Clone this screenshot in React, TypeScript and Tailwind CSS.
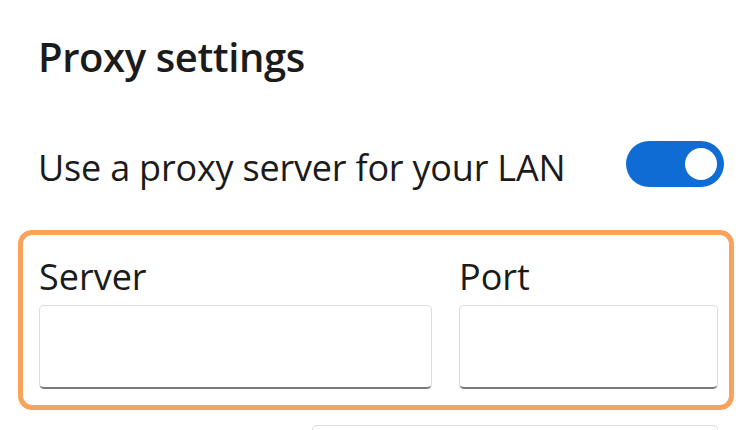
import React, { useState } from 'react';

const font = { fontFamily: '"Open Sans", "Noto Sans", sans-serif' };

const TextBox = ({ className = '' }: { className?: string }) => (
  <div
    className={`h-[84px] rounded-[5px] border border-[#dcdcdc] border-b-2 border-b-[#7a7a7a] bg-white ${className}`}
  />
);

const App = () => {
  const [enabled, setEnabled] = useState(true);

  return (
    <div className="w-[750px] h-[430px] overflow-hidden bg-white text-[#1b1b1b]" style={font}>
      {/* Heading */}
      <h1 className="pl-[38px] pt-[30px] text-[40px] leading-[54px] font-semibold tracking-[-0.4px]">
        Proxy settings
      </h1>

      {/* Toggle row */}
      <div className="mt-[52px] flex items-center justify-between pl-[38px] pr-[26px]">
        <span className="pt-[8px] text-[36px] leading-[48px] tracking-[-0.2px]">Use a proxy server for your LAN</span>
        <button
          onClick={() => setEnabled(!enabled)}
          className={`relative h-[46px] w-[98px] rounded-full ${enabled ? 'bg-[#0f6cd4]' : 'bg-gray-300'}`}
        >
          <span
            className={`absolute top-[7px] h-[32px] w-[32px] rounded-full bg-white ${enabled ? 'right-[7px]' : 'left-[7px]'}`}
          />
        </button>
      </div>

      {/* Highlighted server / port group */}
      <div className="ml-[18px] mt-[38px] w-[716px] rounded-[14px] border-[5px] border-[#f7a35c] pl-[16px] pr-[11px] pt-[20px] pb-[16px]">
        <div className="flex gap-[27px]">
          <div className="w-[393px]">
            <div className="text-[36px] leading-[44px] mb-[6px]">Server</div>
            <TextBox />
          </div>
          <div className="w-[259px]">
            <div className="text-[36px] leading-[44px] mb-[6px]">Port</div>
            <TextBox />
          </div>
        </div>
      </div>

      {/* Next field, cut off by the frame */}
      <div className="ml-[312px] mt-[15px] h-[20px] w-[406px] rounded-t-[5px] border border-b-0 border-[#dcdcdc]" />
    </div>
  );
};

export default App;
